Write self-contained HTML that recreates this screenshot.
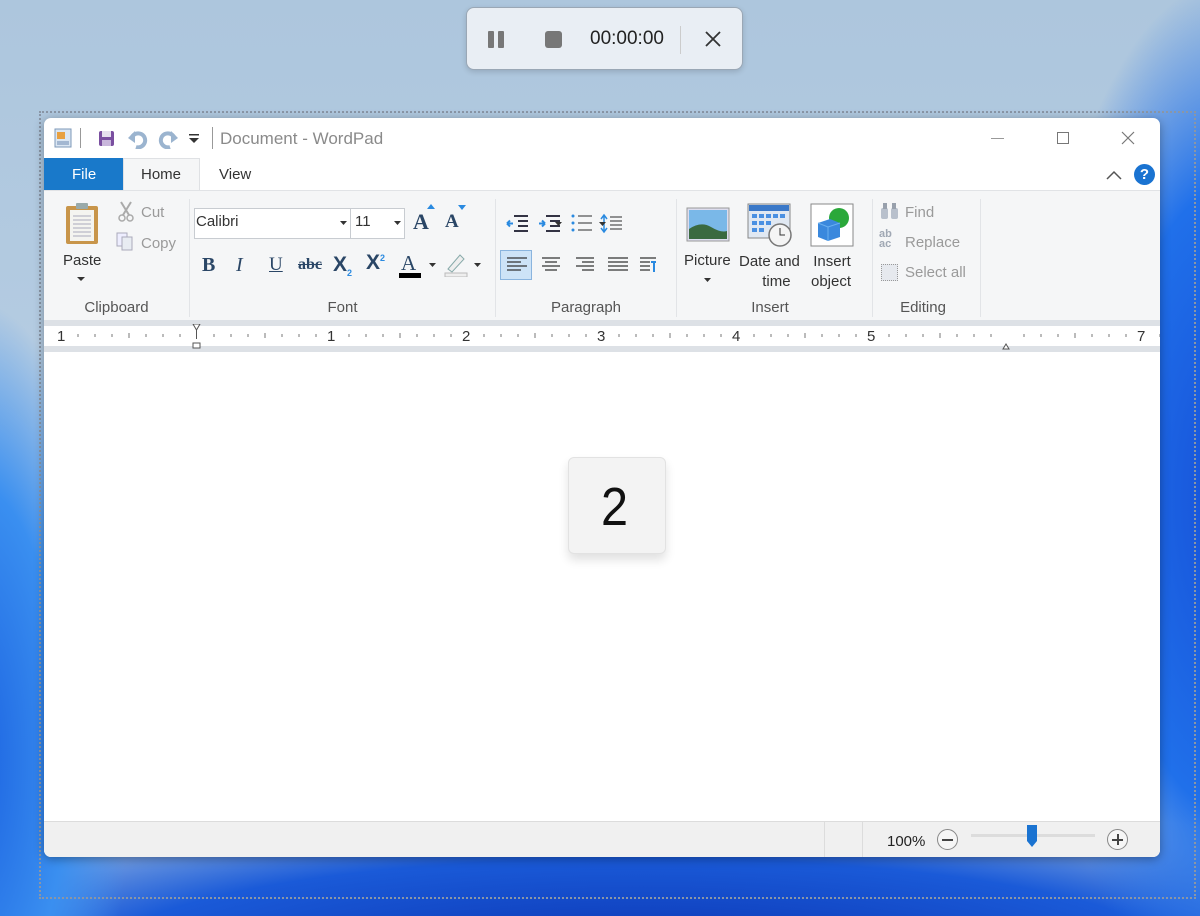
<!DOCTYPE html>
<html><head><style>
*{box-sizing:border-box;margin:0;padding:0}
body{width:1200px;height:916px;overflow:hidden;position:relative;font-family:"Liberation Sans",sans-serif;
background:
radial-gradient(ellipse 200px 520px at 1230px 500px,#1650d8 0%,#2070ea 60%,rgba(60,140,240,0) 100%),
radial-gradient(ellipse 160px 460px at -30px 760px,#1a60e0 0%,#3a8ff0 60%,rgba(80,160,240,0) 100%),
radial-gradient(ellipse 900px 170px at 640px 960px,#0a32b0 0%,#1a5ad8 60%,rgba(40,110,230,0) 100%),
linear-gradient(#adc6dd,#b6cde3 50%,#a8c6e6);}
.abs{position:absolute}
.win{left:44px;top:118px;width:1116px;height:739px;background:#fff;border-radius:7px;box-shadow:0 2px 10px rgba(0,0,0,.35);overflow:hidden}
.sel{left:39px;top:111px;width:1157px;height:788px;border:2px dotted #8a96a6}
.t{position:absolute;font-size:15px;color:#333;white-space:nowrap}
.g{color:#9a9a9a}
.rib{left:0;top:72px;width:1116px;height:130px;background:#f5f6f7;border-top:1px solid #e1e3e6}
.sep{position:absolute;top:8px;width:1px;height:118px;background:#e2e4e7}
.lbl{position:absolute;top:108px;font-size:15px;color:#555;text-align:center}
</style></head><body>
<div class="abs sel"></div>
<!-- recorder -->
<div class="abs" style="left:466px;top:7px;width:277px;height:63px;background:#e9eef4;border:1px solid #9aa7b5;border-radius:8px;box-shadow:0 2px 6px rgba(0,0,0,.15)">
<div class="abs" style="left:21px;top:23px;width:6px;height:17px;background:#777;border-radius:1px"></div>
<div class="abs" style="left:31px;top:23px;width:6px;height:17px;background:#777;border-radius:1px"></div>
<div class="abs" style="left:78px;top:23px;width:17px;height:17px;background:#777;border-radius:3px"></div>
<div class="t" style="left:123px;top:20px;font-size:19px;color:#222">00:00:00</div>
<div class="abs" style="left:213px;top:18px;width:1px;height:28px;background:#ccc"></div>
<svg class="abs" style="left:236px;top:21px" width="20" height="20"><path d="M3 3L17 17M17 3L3 17" stroke="#333" stroke-width="1.8"/></svg>
</div>
<div class="abs win">
<!-- title -->
<svg class="abs" style="left:10px;top:10px" width="18" height="20"><rect x="1" y="1" width="16" height="18" fill="#dbe6f2" stroke="#7e98b8"/><rect x="3" y="4" width="8" height="7" fill="#e8a040"/><path d="M3 14h12M3 16h12" stroke="#6b88b0"/></svg>
<div class="abs" style="left:36px;top:10px;width:1px;height:20px;background:#999"></div>
<svg class="abs" style="left:54px;top:12px" width="17" height="17"><rect x="1" y="1" width="15" height="15" rx="2" fill="#7a4fa0"/><rect x="4" y="1" width="9" height="6" fill="#e6e0ee"/><rect x="4" y="10" width="9" height="6" fill="#c9b7dc"/></svg>
<svg class="abs" style="left:84px;top:11px" width="20" height="20"><path d="M4 8 A7 7 0 1 1 8 18" stroke="#9bb4cf" stroke-width="4" fill="none"/><path d="M0 9L7 2V14Z" fill="#9bb4cf"/></svg>
<svg class="abs" style="left:114px;top:11px" width="20" height="20"><path d="M16 8 A7 7 0 1 0 12 18" stroke="#9bb4cf" stroke-width="4" fill="none"/><path d="M20 9L13 2V14Z" fill="#9bb4cf"/></svg>
<svg class="abs" style="left:144px;top:16px" width="12" height="10"><rect x="1" y="0" width="10" height="1.5" fill="#333"/><path d="M1 4h10L6 9Z" fill="#333"/></svg>
<div class="abs" style="left:168px;top:9px;width:1px;height:22px;background:#999"></div>
<div class="t" style="left:176px;top:11px;font-size:17px;color:#8a8a8a">Document - WordPad</div>
<div class="abs" style="left:947px;top:20px;width:13px;height:1px;background:#999"></div>
<div class="abs" style="left:1013px;top:14px;width:12px;height:12px;border:1px solid #777"></div>
<svg class="abs" style="left:1077px;top:13px" width="14" height="14"><path d="M1 1L13 13M13 1L1 13" stroke="#777" stroke-width="1.2"/></svg>
<!-- tabs -->
<div class="abs" style="left:0;top:40px;width:79px;height:33px;background:#1979ca"></div>
<div class="t" style="left:28px;top:48px;color:#fff">File</div>
<div class="abs" style="left:79px;top:40px;width:77px;height:34px;background:#f5f6f7;border:1px solid #dfe1e4;border-bottom:none"></div>
<div class="t" style="left:97px;top:48px">Home</div>
<div class="t" style="left:175px;top:48px">View</div>
<svg class="abs" style="left:1062px;top:52px" width="16" height="10"><path d="M1 9L8 2L15 9" stroke="#555" stroke-width="1.5" fill="none"/></svg>
<div class="abs" style="left:1090px;top:46px;width:21px;height:21px;border-radius:50%;background:#1a73d1;color:#fff;font-size:15px;font-weight:bold;text-align:center;line-height:21px">?</div>
<!-- ribbon -->
<div class="abs rib">
<svg class="abs" style="left:20px;top:11px" width="36" height="44"><rect x="2" y="4" width="32" height="38" rx="2" fill="#c8954a"/><rect x="6" y="8" width="24" height="31" fill="#f4f4f0"/><path d="M9 14h18M9 18h18M9 22h18M9 26h18M9 30h18M9 34h18" stroke="#aab"/><rect x="12" y="1" width="12" height="6" rx="1" fill="#9aa"/></svg>
<div class="t" style="left:19px;top:61px">Paste</div>
<svg class="abs" style="left:33px;top:86px" width="8" height="5"><path d="M0 0h8L4 4Z" fill="#333"/></svg>
<svg class="abs" style="left:74px;top:10px" width="16" height="22"><path d="M3 1L11 14M13 1L5 14" stroke="#aaa" stroke-width="2"/><circle cx="4" cy="17" r="3" fill="none" stroke="#aaa" stroke-width="1.5"/><circle cx="12" cy="17" r="3" fill="none" stroke="#aaa" stroke-width="1.5"/></svg>
<div class="t g" style="left:97px;top:13px">Cut</div>
<svg class="abs" style="left:72px;top:41px" width="18" height="20"><rect x="1" y="1" width="10" height="13" fill="#eef" stroke="#aab"/><rect x="6" y="5" width="10" height="13" fill="#e8ecf2" stroke="#aab"/></svg>
<div class="t g" style="left:97px;top:44px">Copy</div>
<div class="lbl" style="left:0;width:145px">Clipboard</div>
<div class="sep" style="left:145px"></div>
<!-- font -->
<div class="abs" style="left:150px;top:17px;width:157px;height:31px;background:#fff;border:1px solid #c8ccd1"></div>
<div class="t" style="left:152px;top:22px">Calibri</div>
<svg class="abs" style="left:296px;top:30px" width="7" height="4"><path d="M0 0h7L3.5 4Z" fill="#333"/></svg>
<div class="abs" style="left:306px;top:17px;width:55px;height:31px;background:#fff;border:1px solid #c8ccd1"></div>
<div class="t" style="left:311px;top:22px">11</div>
<svg class="abs" style="left:350px;top:30px" width="7" height="4"><path d="M0 0h7L3.5 4Z" fill="#333"/></svg>
<div class="t" style="left:369px;top:18px;font-family:'Liberation Serif';font-weight:bold;font-size:22px;color:#2a4666">A</div>
<svg class="abs" style="left:383px;top:13px" width="8" height="5"><path d="M0 5L4 0L8 5Z" fill="#2a8ae0"/></svg>
<div class="t" style="left:401px;top:20px;font-family:'Liberation Serif';font-weight:bold;font-size:19px;color:#2a4666">A</div>
<svg class="abs" style="left:414px;top:14px" width="8" height="5"><path d="M0 0L4 5L8 0Z" fill="#2a8ae0"/></svg>
<div class="t" style="left:158px;top:63px;font-family:'Liberation Serif';font-weight:bold;font-size:20px;color:#2a4666">B</div>
<div class="t" style="left:192px;top:63px;font-family:'Liberation Serif';font-style:italic;font-size:20px;color:#2a4666">I</div>
<div class="t" style="left:225px;top:63px;font-family:'Liberation Serif';text-decoration:underline;font-size:19px;color:#2a4666">U</div>
<div class="t" style="left:254px;top:65px;font-family:'Liberation Serif';text-decoration:line-through;font-size:16px;color:#2a4666;font-weight:bold">abc</div>
<div class="t" style="left:289px;top:62px;font-size:21px;color:#2a4666;font-weight:bold">X<sub style="font-size:9px;color:#2a8ae0">2</sub></div>
<div class="t" style="left:322px;top:60px;font-size:21px;color:#2a4666;font-weight:bold">X<sup style="font-size:9px;color:#2a8ae0">2</sup></div>
<div class="t" style="left:357px;top:60px;font-family:'Liberation Serif';font-size:21px;color:#2a4666">A</div>
<div class="abs" style="left:355px;top:82px;width:22px;height:5px;background:#000"></div>
<svg class="abs" style="left:385px;top:72px" width="7" height="4"><path d="M0 0h7L3.5 4Z" fill="#333"/></svg>
<svg class="abs" style="left:400px;top:62px" width="24" height="24"><path d="M4 16L16 2L20 6L8 19Z" fill="#eee" stroke="#8aa"/><rect x="1" y="20" width="22" height="4" fill="#eee" stroke="#bbb"/></svg>
<svg class="abs" style="left:430px;top:72px" width="7" height="4"><path d="M0 0h7L3.5 4Z" fill="#333"/></svg>
<div class="lbl" style="left:146px;width:305px">Font</div>
<div class="sep" style="left:451px"></div>
<!-- paragraph -->
<svg class="abs" style="left:462px;top:22px" width="160" height="24" fill="none" stroke-width="2">
<path d="M8 3h14M12 8h10M12 13h10M8 18h14" stroke="#334"/><path d="M1 10.5h6M1 10.5l3-3M1 10.5l3 3" stroke="#2a8ae0"/>
<path d="M40 3h14M44 8h10M44 13h10M40 18h14" stroke="#334"/><path d="M33 10.5h6M39 10.5l-3-3M39 10.5l-3 3" stroke="#2a8ae0"/>
<circle cx="67" cy="3" r="1.5" fill="#2a8ae0" stroke="none"/><circle cx="67" cy="10" r="1.5" fill="#2a8ae0" stroke="none"/><circle cx="67" cy="17" r="1.5" fill="#2a8ae0" stroke="none"/>
<path d="M72 3h14M72 10h14M72 17h14" stroke="#555" stroke-width="1.2"/>
<path d="M95 6L98 2L101 6M95 15L98 19L101 15M98 3v15" stroke="#2a8ae0" stroke-width="1.5"/><path d="M104 4h12M104 8h12M104 12h12M104 16h12" stroke="#555" stroke-width="1.2"/>
</svg>
<svg class="abs" style="left:511px;top:31px" width="7" height="4"><path d="M0 0h7L3.5 4Z" fill="#333"/></svg>
<svg class="abs" style="left:555px;top:31px" width="7" height="4"><path d="M0 0h7L3.5 4Z" fill="#333"/></svg>
<div class="abs" style="left:456px;top:59px;width:32px;height:30px;background:#cde3f7;border:1px solid #8ab4de"></div>
<svg class="abs" style="left:460px;top:64px" width="160" height="20" stroke="#333" stroke-width="1.3">
<path d="M3 3h20M3 7h14M3 11h20M3 15h14"/>
<path d="M38 3h18M41 7h12M38 11h18M41 15h12"/>
<path d="M72 3h18M78 7h12M72 11h18M78 15h12"/>
<path d="M104 3h20M104 7h20M104 11h20M104 15h20"/>
<path d="M136 3h16M136 7h10M136 11h10M136 15h10"/><path d="M150 7v10M147 7h5" stroke="#2a8ae0" stroke-width="2"/>
</svg>
<div class="lbl" style="left:452px;width:180px">Paragraph</div>
<div class="sep" style="left:632px"></div>
<!-- insert -->
<svg class="abs" style="left:642px;top:16px" width="44" height="36"><rect x="1" y="1" width="42" height="33" fill="#dde" stroke="#999"/><rect x="3" y="3" width="38" height="29" fill="#7ab8e8"/><path d="M3 22Q15 14 25 20T41 24V32H3Z" fill="#3a6a40"/></svg>
<div class="t" style="left:640px;top:61px">Picture</div>
<svg class="abs" style="left:660px;top:87px" width="7" height="4"><path d="M0 0h7L3.5 4Z" fill="#333"/></svg>
<svg class="abs" style="left:703px;top:12px" width="46" height="44"><rect x="1" y="1" width="42" height="34" fill="#e0e8f2" stroke="#888"/><rect x="2" y="2" width="40" height="6" fill="#3a78c8"/><g fill="#4a90e2"><rect x="5" y="11" width="5" height="4"/><rect x="12" y="11" width="5" height="4"/><rect x="19" y="11" width="5" height="4"/><rect x="26" y="11" width="5" height="4"/><rect x="33" y="11" width="5" height="4"/><rect x="5" y="18" width="5" height="4"/><rect x="12" y="18" width="5" height="4"/><rect x="19" y="18" width="5" height="4"/><rect x="5" y="25" width="5" height="4"/><rect x="12" y="25" width="5" height="4"/></g><circle cx="33" cy="32" r="11" fill="#f4f4f4" stroke="#777" stroke-width="1.5"/><path d="M33 25v7h5" stroke="#333" fill="none"/></svg>
<div class="t" style="left:695px;top:61px;text-align:center;line-height:20px">Date and<br><span style="padding-left:14px">time</span></div>
<svg class="abs" style="left:766px;top:12px" width="44" height="44"><rect x="1" y="1" width="42" height="42" fill="#fff" stroke="#888"/><circle cx="29" cy="15" r="10" fill="#2aa83a"/><path d="M8 20L20 16L30 20V34L18 38L8 34Z" fill="#3a88dd"/><path d="M8 20L18 24L30 20M18 24V38" stroke="#6ab0f0" fill="none"/></svg>
<div class="t" style="left:767px;top:61px;text-align:center;line-height:20px"><span style="padding-left:2px">Insert</span><br>object</div>
<div class="lbl" style="left:633px;width:186px">Insert</div>
<div class="sep" style="left:828px"></div>
<!-- editing -->
<svg class="abs" style="left:836px;top:11px" width="20" height="18"><rect x="1" y="6" width="7" height="11" rx="2" fill="#b8c0cc"/><rect x="11" y="6" width="7" height="11" rx="2" fill="#b8c0cc"/><rect x="3" y="1" width="4" height="6" fill="#98a0ac"/><rect x="12" y="1" width="4" height="6" fill="#98a0ac"/></svg>
<div class="t g" style="left:861px;top:13px">Find</div>
<div class="t" style="left:835px;top:38px;font-size:11px;color:#a0a8b4;font-weight:bold;line-height:10px">ab<br>ac</div>
<div class="t g" style="left:861px;top:43px">Replace</div>
<div class="abs" style="left:837px;top:73px;width:17px;height:17px;border:1px dotted #999;background:#e6e9ee"></div>
<div class="t g" style="left:861px;top:73px">Select all</div>
<div class="lbl" style="left:829px;width:100px">Editing</div>
<div class="sep" style="left:936px"></div>
</div>
<!-- ruler -->
<div class="abs" style="left:0;top:202px;width:1116px;height:32px;background:#dde1e6"></div>
<div class="abs" style="left:0;top:208px;width:1116px;height:20px;background:#fff"></div>
<svg class="abs" style="left:0;top:206px" width="1116" height="28" font-family="Liberation Sans" font-size="15" fill="#333">
<g stroke="#777" stroke-width="1">
<path d="M34 10v3M51 10v3M68 10v3M85 9v5M102 10v3M119 10v3M136 10v3M170 10v3M187 10v3M204 10v3M221 9v5M238 10v3M255 10v3M272 10v3M305 10v3M322 10v3M339 10v3M356 9v5M373 10v3M390 10v3M407 10v3M440 10v3M457 10v3M474 10v3M491 9v5M508 10v3M525 10v3M542 10v3M575 10v3M592 10v3M609 10v3M626 9v5M643 10v3M660 10v3M677 10v3M710 10v3M727 10v3M744 10v3M761 9v5M778 10v3M795 10v3M812 10v3M845 10v3M862 10v3M879 10v3M896 9v5M913 10v3M930 10v3M947 10v3M980 10v3M997 10v3M1014 10v3M1031 9v5M1048 10v3M1065 10v3M1082 10v3M1116 10v3"/>
</g>
<text x="13" y="17">1</text><text x="283" y="17">1</text><text x="418" y="17">2</text><text x="553" y="17">3</text><text x="688" y="17">4</text><text x="823" y="17">5</text><text x="1093" y="17">7</text>
<path d="M149 0h7l-3.5 6Z M152.5 6v9 M149 19h7v5h-7Z" stroke="#555" fill="#fff"/>
<path d="M962 20l-3 5h6Z" stroke="#555" fill="#fff"/>
</svg>
<!-- key badge -->
<div class="abs" style="left:524px;top:339px;width:98px;height:97px;background:#f3f3f3;border:1px solid #e2e2e2;border-radius:6px;box-shadow:0 6px 10px rgba(0,0,0,.12)"></div>
<div class="t" style="left:557px;top:358px;font-size:54px;color:#111;transform:scaleX(.9);transform-origin:left">2</div>
<!-- status bar -->
<div class="abs" style="left:0;top:703px;width:1116px;height:36px;background:#f0f0f0;border-top:1px solid #dcdcdc"></div>
<div class="abs" style="left:780px;top:704px;width:1px;height:35px;background:#dcdcdc"></div>
<div class="abs" style="left:818px;top:704px;width:1px;height:35px;background:#dcdcdc"></div>
<div class="t" style="left:843px;top:715px;font-size:15px;color:#222">100%</div>
<div class="abs" style="left:893px;top:711px;width:21px;height:21px;border:1px solid #888;border-radius:50%;background:#f6f6f6"></div>
<div class="abs" style="left:898px;top:721px;width:11px;height:2px;background:#444"></div>
<div class="abs" style="left:927px;top:716px;width:124px;height:3px;background:#dcdcdc"></div>
<svg class="abs" style="left:982px;top:706px" width="12" height="24"><path d="M1 1h10v16l-5 6l-5-6Z" fill="#1a73d1"/></svg>
<div class="abs" style="left:1063px;top:711px;width:21px;height:21px;border:1px solid #888;border-radius:50%;background:#f6f6f6"></div>
<div class="abs" style="left:1068px;top:721px;width:11px;height:2px;background:#444"></div>
<div class="abs" style="left:1073px;top:716px;width:2px;height:11px;background:#444"></div>
</div>
</body></html>
